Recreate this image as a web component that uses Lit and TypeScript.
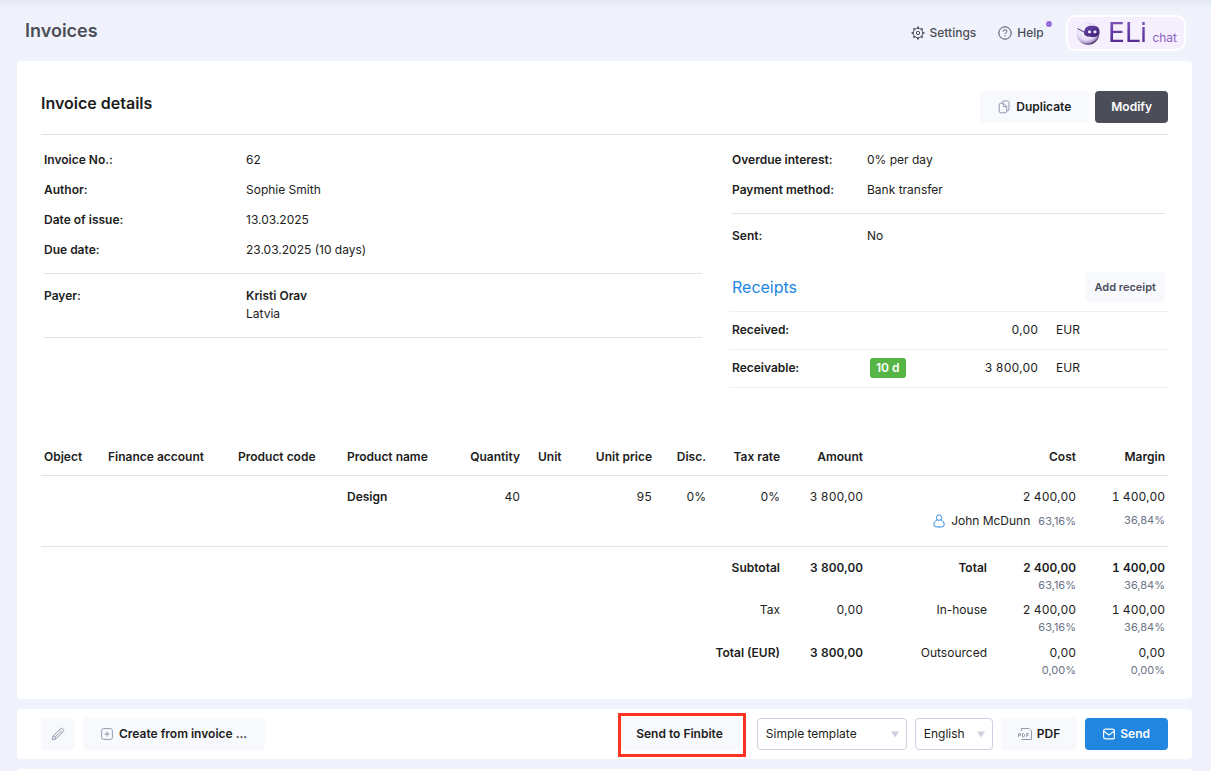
import { LitElement, html, css, svg, nothing } from "lit";
import { customElement } from "lit/decorators.js";

interface Line {
  label: string;
  amount: string;
  strong?: boolean;
  share: string;
  cost: string;
  costPct: string;
  margin: string;
  marginPct: string;
}

const TOTALS: Line[] = [
  { label: "Subtotal", amount: "3 800,00", strong: true, share: "Total", cost: "2 400,00", costPct: "63,16%", margin: "1 400,00", marginPct: "36,84%" },
  { label: "Tax", amount: "0,00", share: "In-house", cost: "2 400,00", costPct: "63,16%", margin: "1 400,00", marginPct: "36,84%" },
  { label: "Total (EUR)", amount: "3 800,00", strong: true, share: "Outsourced", cost: "0,00", costPct: "0,00%", margin: "0,00", marginPct: "0,00%" },
];

const COLUMNS: { name: string; cls: string; num?: boolean }[] = [
  { name: "Object", cls: "c-object" },
  { name: "Finance account", cls: "c-account" },
  { name: "Product code", cls: "c-code" },
  { name: "Product name", cls: "c-name" },
  { name: "Quantity", cls: "c-qty", num: true },
  { name: "Unit", cls: "c-unit" },
  { name: "Unit price", cls: "c-price", num: true },
  { name: "Disc.", cls: "c-disc", num: true },
  { name: "Tax rate", cls: "c-tax", num: true },
  { name: "Amount", cls: "c-amount", num: true },
  { name: "", cls: "c-share" },
  { name: "Cost", cls: "c-cost", num: true },
  { name: "Margin", cls: "c-margin", num: true },
];

const teeth = [0, 45, 90, 135, 180, 225, 270, 315].map(
  (a) => svg`<path d="M7 .6V2.200" stroke-width="1.800" transform="rotate(${a} 7 7)"/>`
);

const gearIcon = html`<svg class="icon" width="14" height="14" viewBox="0 0 14 14" aria-hidden="true">
  <circle cx="7" cy="7" r="4.800"/><circle cx="7" cy="7" r="1.700"/>${teeth}</svg>`;
const helpIcon = html`<svg class="icon" width="14" height="14" viewBox="0 0 14 14" aria-hidden="true">
  <circle cx="7" cy="7" r="6.200"/><path d="M5.200 5.600c0-2.400 3.600-2.400 3.600 0 0 1.300-1.800 1.300-1.800 2.600M7 9.500v1"/></svg>`;
const copyIcon = html`<svg class="icon muted" width="12" height="14" viewBox="0 0 12 14" aria-hidden="true">
  <path d="M4 2.800Q4 1 5.500 1H9.500Q11 1 11 2.500v6.500q0 2-2 2"/>
  <path d="M1.200 5Q1.200 3.200 2.700 3.200H5.500L8.700 6.400V11.200q0 1.600-1.600 1.600H2.800q-1.600 0-1.600-1.600zM5.300 3.400V6.600H8.500"/></svg>`;
const pencilIcon = html`<svg class="icon muted" width="14" height="14" viewBox="0 0 14 14" aria-hidden="true">
  <path d="M1.200 12.800 2.200 9 9.600 1.600q1-1 2 0l.8.8q1 1 0 2L5 11.800zM8.400 2.800l2.800 2.800M2.200 9l1 .3.400 1.100 1.100.4.300 1M9.200 5 4.400 9.800"/></svg>`;
const plusIcon = html`<svg class="icon muted" width="12" height="12" viewBox="0 0 12 12" aria-hidden="true">
  <rect x=".6" y=".6" width="10.800" height="10.800" rx="2"/><path d="M6 3.500v5M3.500 6h5"/></svg>`;
const pdfIcon = html`<svg class="icon muted" width="14" height="12" viewBox="0 0 14 12" aria-hidden="true">
  <path d="M3.500 3V.5H11L13.500 3V11.500H3.500"/>
  <path stroke-width=".9" d="M.5 9V5.500H2.500V7.500H.5M4.500 5.500V9H5.500L6.500 8V6.500L5.500 5.500zM8.500 9V5.500H11M8.500 7.300H10.500"/></svg>`;
const mailIcon = html`<svg class="icon light" width="12" height="12" viewBox="0 0 12 12" aria-hidden="true">
  <rect x=".6" y="1.100" width="10.800" height="9.800" rx="2"/><path d="M.8 3.200 6 7l5.200-3.800"/></svg>`;
const personIcon = html`<svg class="icon blue" width="12" height="14" viewBox="0 0 12 14" aria-hidden="true">
  <path d="M4.300 5.800C2.700 4 3.300 1 6 1s3.300 3 1.700 4.800C10 6.500 11.200 8.500 11.200 10.600 11.200 12.300 9.500 13 6 13S.8 12.300.8 10.600C.8 8.500 2 6.500 4.300 5.800zM4.300 5.800q1.700 1.200 3.400 0"/></svg>`;
const arrow = html`<svg class="arrow" width="8" height="7" viewBox="0 0 8 7" aria-hidden="true"><path d="M0 .5h8L4 6.500z"/></svg>`;
const robot = html`<svg width="24" height="24" viewBox="0 0 24 24" aria-hidden="true">
  <defs>
    <radialGradient id="ball" cx=".42" cy=".35" r=".66">
      <stop offset="0" stop-color="#fff"/><stop offset=".65" stop-color="#e6dcf6"/><stop offset=".85" stop-color="#b3a0d2"/><stop offset="1" stop-color="#33234f"/>
    </radialGradient>
    <linearGradient id="visor" x1="0" y1="0" x2="1" y2="1">
      <stop offset="0" stop-color="#6c46ad"/><stop offset="1" stop-color="#38206a"/>
    </linearGradient>
  </defs>
  <circle cx="12" cy="12.500" r="11.300" fill="url(#ball)"/>
  <path d="M1.500 7.500 8 11" stroke="#4a3478" stroke-width="1" fill="none"/>
  <path d="M8 11C9 5.500 12 4.500 16.500 4.700 21.500 5 24 7 23.500 11.500 23 15.500 20 16.300 15.500 16 10.500 15.800 7.500 14.500 8 11z" fill="url(#visor)"/>
  <rect x="12" y="9.500" width="3" height="2.800" rx="1" fill="#f1e6ff"/>
  <rect x="17.500" y="9.500" width="3" height="2.800" rx="1" fill="#f1e6ff"/></svg>`;

@customElement("app-root")
export class AppRoot extends LitElement {
  static styles = css`
    :host {
      display: flex;
      flex-direction: column;
      min-height: 100vh;
      box-sizing: border-box;
      padding: 0 19px 0 17px;
      font: 12px/18px Inter, "Liberation Sans", sans-serif;
      color: #1c1d21;
      background: linear-gradient(#e4e8f1, #edf1f9 6px, #f0f3fb 20px);
    }
    * { box-sizing: border-box; }
    h1, h2, h3, dl, dd { margin: 0; }
    h1, h2, h3, dt, th, .strong { font-weight: 600; }
    .icon { fill: none; stroke: #4b4e59; stroke-width: 1; flex: none; }
    .icon.muted { stroke: #9399ae; }
    .icon.light { stroke: #fff; stroke-width: 1.2; }
    .icon.blue { stroke: #2186e0; }

    .top { display: flex; align-items: center; height: 61px; padding: 5px 6px 0 8px; }
    .top h1 { flex: 1; font-size: 18px; line-height: 24px; color: #4b4e59; padding-bottom: 4px; }
    .top a { display: flex; align-items: center; gap: 5px; color: #4b4e59; font-weight: 500; text-decoration: none; position: relative; margin-right: 22px; }
    .top a.help::after { content: ""; position: absolute; width: 6px; height: 6px; border-radius: 50%; background: #9b6ddb; right: -8px; top: -3px; }
    .eli {
      display: flex; align-items: center; height: 36px; padding: 0 7px 0 8px; font: inherit;
      border: 2px solid #fff; border-radius: 10px; background: #f6effd;
    }
    .eli .mark {
      margin-left: 8px; font: 27px/28px "DejaVu Sans", sans-serif;
      background: linear-gradient(#8058bb, #4b2388); background-clip: text; color: transparent;
    }
    .eli .chat { color: #8a5fc4; margin-left: 5px; padding-top: 10px; }

    .card { background: #fff; border-radius: 4px; padding: 0 24px; }
    .main { padding-bottom: 12px; }
    .head { display: flex; align-items: flex-start; gap: 6px; height: 74px; padding-top: 30px; border-bottom: 1px solid #dfe2ea; }
    .head h2 { flex: 1; font-size: 16px; line-height: 24px; }

    button { font-family: inherit; cursor: pointer; }
    .btn {
      display: flex; align-items: center; justify-content: center; gap: 6px; height: 32px; padding: 0 16px;
      border: 0; border-radius: 4px; background: #f8f9fd; color: #1c1d21; font-size: 12px; line-height: 16px; font-weight: 600; white-space: nowrap;
    }
    .btn.wide { padding: 0 18px; }
    .btn.pdf { padding: 0 17px; gap: 5px; }
    .btn.dark { background: #4b4e59; color: #fff; }
    .btn.primary { background: #2186e0; color: #fff; padding: 0 18px; gap: 5px; }
    .btn.square { width: 34px; padding: 0; }
    .btn.small { height: 30px; padding: 0 9px; font-size: 11px; color: #4b4e59; }

    .info { display: grid; grid-template-columns: 658fr 433fr; gap: 30px; padding: 10px 3px 0; min-height: 304px; }
    .list { display: grid; grid-template-columns: 202px 1fr; }
    .side .list { grid-template-columns: 135px 1fr; }
    .list dt, .list dd { padding: 6px 0; }
    .rule { border-bottom: 1px solid #dfe2ea; padding-bottom: 8px; margin-bottom: 7px; }
    .receipt-head { display: flex; align-items: center; justify-content: space-between; margin-top: 21px; padding-bottom: 9px; }
    .receipt-head h3 { font-size: 16px; line-height: 24px; font-weight: 400; color: #2186e0; }
    .receipts { margin: 0 -3px; width: calc(100% + 6px); border-collapse: collapse; font-variant-numeric: tabular-nums; }
    .receipts th, .receipts td { border-top: 1px solid #eef0f7; border-bottom: 1px solid #eef0f7; height: 38px; padding: 0 3px 1px; }
    .receipts th { text-align: left; width: 138px; }
    .receipts .sum { text-align: right; padding-right: 0; }
    .receipts .cur { width: 130px; padding-left: 18px; }
    .badge { display: inline-block; padding: 1px 6px; border-radius: 3px; background: #56b544; color: #fff; font-weight: 600; font-variant-numeric: normal; }

    .items { width: 100%; table-layout: fixed; border-collapse: collapse; }
    .items th, .items td { padding: 0 9px; text-align: left; vertical-align: top; white-space: nowrap; }
    .items tr > :first-child { padding-left: 3px; }
    .items tr > :last-child { padding-right: 3px; }
    .items .num { text-align: right; }
    .items td { font-variant-numeric: tabular-nums; }
    .items thead th { height: 36px; padding-top: 9px; border-bottom: 1px solid #dfe2ea; }
    .items .first td { padding-top: 12px; height: 36px; }
    .items .second td { height: 35px; padding-top: 1px; border-bottom: 1px solid #dfe2ea; }
    .items .foot td, .items .foot th { height: 43px; padding-bottom: 7px; }
    .items .foot:first-child > * { padding-top: 12px; height: 55px; }
    .items .plain { font-weight: 400; }
    .items .pct { display: block; font-size: 11px; line-height: 17px; font-weight: 400; color: #6b7385; font-variant-numeric: normal; }
    .who { display: flex; justify-content: flex-end; align-items: center; gap: 8px; }
    .who .icon { margin-right: -2px; }
    .c-object { width: 58px; } .c-account { width: 130px; } .c-code { width: 109px; } .c-name { width: 122px; }
    .c-qty { width: 69px; } .c-unit { width: 50px; } .c-price { width: 82px; } .c-disc { width: 54px; }
    .c-tax { width: 74px; } .c-amount { width: 83px; } .c-share { width: 124px; } .c-cost { width: 89px; } .c-margin { width: 83px; }

    .bar { display: flex; align-items: center; gap: 8px; height: 50px; margin: 10px 0; flex: none; }
    .spacer { flex: 1; }
    .marked { position: relative; margin-right: 8px; }
    .marked::after { content: ""; position: absolute; inset: -5px -5px -7px 0; border: 3px solid #fb3320; pointer-events: none; }
    .pick { position: relative; display: flex; align-items: center; }
    .pick select {
      appearance: none; width: 100%; height: 32px; padding: 0 24px 0 8px; font: inherit; color: inherit;
      border: 1px solid #cdd0e0; border-radius: 4px; background: #fff;
    }
    .pick .arrow { position: absolute; right: 8px; fill: #cdd0e0; pointer-events: none; }
    .pick.template { width: 150px; }
    .pick.language { width: 78px; }
    .next { flex: 1; border-radius: 4px 4px 0 0; }
  `;

  private foot(l: Line) {
    const weight = l.strong ? "strong" : "plain";
    const shareWeight = l.share === "Total" ? "strong" : "plain";
    return html`<tr class="foot">
      <td colspan="6"></td>
      <th scope="row" colspan="3" class="num ${weight}">${l.label}</th>
      <td class="num ${weight}">${l.amount}</td>
      <th scope="row" class="num ${shareWeight}">${l.share}</th>
      <td class="num ${shareWeight}">${l.cost}<span class="pct">${l.costPct}</span></td>
      <td class="num ${shareWeight}">${l.margin}<span class="pct">${l.marginPct}</span></td>
    </tr>`;
  }

  render() {
    return html`
      <header class="top">
        <h1>Invoices</h1>
        <a href="#settings">${gearIcon}Settings</a>
        <a class="help" href="#help">${helpIcon}Help</a>
        <button class="eli">${robot}<span class="mark">ELi</span><span class="chat">chat</span></button>
      </header>

      <main class="card main">
        <div class="head">
          <h2>Invoice details</h2>
          <button class="btn wide">${copyIcon}Duplicate</button>
          <button class="btn dark">Modify</button>
        </div>

        <div class="info">
          <section>
            <dl class="list rule">
              <dt>Invoice No.:</dt><dd>62</dd>
              <dt>Author:</dt><dd>Sophie Smith</dd>
              <dt>Date of issue:</dt><dd>13.03.2025</dd>
              <dt>Due date:</dt><dd>23.03.2025 (10 days)</dd>
            </dl>
            <dl class="list rule">
              <dt>Payer:</dt><dd><span class="strong">Kristi Orav</span><br />Latvia</dd>
            </dl>
          </section>
          <section class="side">
            <dl class="list rule">
              <dt>Overdue interest:</dt><dd>0% per day</dd>
              <dt>Payment method:</dt><dd>Bank transfer</dd>
            </dl>
            <dl class="list"><dt>Sent:</dt><dd>No</dd></dl>
            <div class="receipt-head">
              <h3>Receipts</h3>
              <button class="btn small">Add receipt</button>
            </div>
            <table class="receipts">
              <tr><th scope="row">Received:</th><td></td><td class="sum">0,00</td><td class="cur">EUR</td></tr>
              <tr><th scope="row">Receivable:</th><td><span class="badge">10 d</span></td><td class="sum">3 800,00</td><td class="cur">EUR</td></tr>
            </table>
          </section>
        </div>

        <table class="items">
          <colgroup>${COLUMNS.map((c) => html`<col class=${c.cls} />`)}</colgroup>
          <thead>
            <tr>${COLUMNS.map((c) => html`<th scope="col" class=${c.num ? "num" : nothing}>${c.name}</th>`)}</tr>
          </thead>
          <tbody>
            <tr class="first">
              <td></td><td></td><td></td><td class="strong">Design</td><td class="num">40</td><td></td>
              <td class="num">95</td><td class="num">0%</td><td class="num">0%</td><td class="num">3 800,00</td>
              <td></td><td class="num">2 400,00</td><td class="num">1 400,00</td>
            </tr>
            <tr class="second">
              <td colspan="10"></td>
              <td colspan="2"><div class="who">${personIcon}<span>John McDunn</span><span class="pct">63,16%</span></div></td>
              <td class="num"><span class="pct">36,84%</span></td>
            </tr>
          </tbody>
          <tfoot>${TOTALS.map((l) => this.foot(l))}</tfoot>
        </table>
      </main>

      <div class="card bar">
        <button class="btn square" aria-label="Edit">${pencilIcon}</button>
        <button class="btn wide">${plusIcon}Create from invoice ...</button>
        <span class="spacer"></span>
        <button class="btn wide marked">Send to Finbite</button>
        <label class="pick template"><select aria-label="Template"><option>Simple template</option></select>${arrow}</label>
        <label class="pick language"><select aria-label="Language"><option>English</option></select>${arrow}</label>
        <button class="btn pdf">${pdfIcon}PDF</button>
        <button class="btn primary">${mailIcon}Send</button>
      </div>
      <div class="card next"></div>
    `;
  }
}
